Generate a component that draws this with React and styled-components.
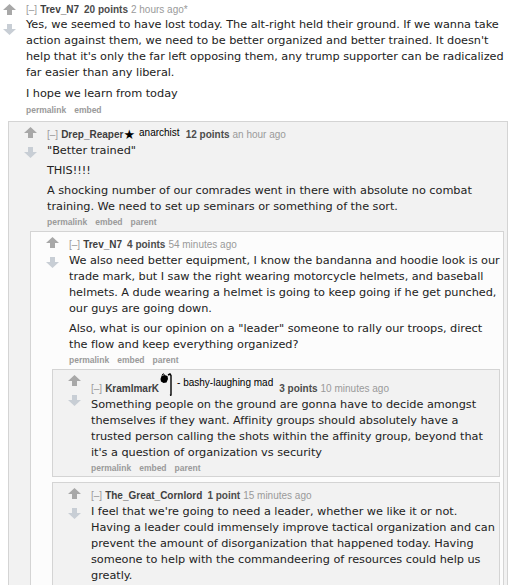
import React from "react";
import styled, { createGlobalStyle } from "styled-components";

const GlobalStyle = createGlobalStyle`
  html, body { margin: 0; padding: 0; background: #ffffff; }
  body { width: 517px; height: 585px; overflow: hidden; }
`;

const Page = styled.div`
  width: 517px;
  overflow: hidden;
  font-family: "Liberation Sans", Arial, sans-serif;
`;

const Box = styled.div`
  background: ${(p) => (p.$depth === 0 ? "#ffffff" : p.$depth % 2 ? "#f2f2f2" : "#fcfcfc")};
  border: ${(p) => (p.$depth === 0 ? "none" : "1px solid #d4d4d4")};
  padding-top: ${(p) => (p.$depth === 0 ? 4 : p.$tall ? 3 : 7)}px;
  padding-bottom: 2px;
  margin-top: ${(p) => (p.$depth === 0 ? 0 : p.$depth > 1 && p.$first ? 3 : 5)}px;
  margin-right: ${(p) => (p.$depth === 0 ? 0 : 3)}px;
`;

const Row = styled.div`
  display: flex;
  padding-left: ${(p) => (p.$depth === 0 ? 3 : 15)}px;
  padding-right: ${(p) => (p.$depth === 0 ? 6 : 0)}px;
`;

const Midcol = styled.div`
  width: 13px;
  flex: none;
  display: flex;
  flex-direction: column;
  gap: 9px;
  margin-right: 10px;
  margin-top: ${(p) => (p.$depth === 0 ? 0 : p.$tall ? 2 : -2)}px;
`;

const Entry = styled.div`
  flex: 1;
  min-width: 0;
`;

const Tagline = styled.div`
  font-size: 10px;
  line-height: 12px;
  color: #888;
  white-space: nowrap;
  display: flex;
  align-items: flex-end;
`;

const Expand = styled.span`
  color: #9a9a9a;
  margin-right: 3px;
`;

const Author = styled.span`
  font-weight: bold;
  color: #3f3f3f;
`;

const Score = styled.span`
  font-weight: bold;
  color: #4c4c4c;
  margin-left: 5px;
  margin-right: 3px;
`;

const Time = styled.span`
  color: #9a9a9a;
`;

const Star = styled.span`
  color: #000;
  font-size: 13px;
  line-height: 12px;
  font-family: "DejaVu Sans", sans-serif;
`;

const Flair = styled.span`
  color: #000;
  font-size: 10px;
  position: relative;
  top: ${(p) => -(p.$raise || 2)}px;
  margin-left: 4px;
  margin-right: 1px;
`;

const FlairIcon = styled.svg`
  display: block;
  margin-left: 1px;
  margin-bottom: -1px;
`;

const Md = styled.div`
  font-family: "DejaVu Sans", Verdana, sans-serif;
  font-size: 11.3px;
  letter-spacing: -0.04px;
  line-height: 16px;
  color: #222;
  margin-top: ${(p) => (p.$depth === 0 ? 1 : 2)}px;
  p { margin: 0 0 ${(p) => (p.$depth === 0 ? 5 : 4)}px 0; }
  p:last-child { margin-bottom: 0; }
`;

const Buttons = styled.div`
  display: flex;
  gap: 8px;
  font-size: 8.5px;
  line-height: 12px;
  margin-top: ${(p) => (p.$depth === 0 ? 2 : 1)}px;
  color: #9a9a9a;
  font-weight: bold;
`;

const Children = styled.div`
  margin-left: ${(p) => (p.$depth === 0 ? 8 : 21)}px;
  margin-right: ${(p) => (p.$depth === 0 ? 6 : 0)}px;
`;

const Arrow = ({ up }) => (
  <svg width="13" height="11" viewBox="0 0 13 11">
    {up ? (
      <polygon points="6.5,0 13,6 9,6 9,11 4,11 4,6 0,6" fill="#a8a8a8" />
    ) : (
      <polygon points="6.5,11 13,5 9,5 9,0 4,0 4,5 0,5" fill="#c8ced5" />
    )}
  </svg>
);

const BashyIcon = () => (
  <FlairIcon width="13" height="23" viewBox="0 0 13 23">
    <path d="M0.5 6 L1.5 3 L4.5 2 L7.5 3 L8 6 L6.5 9.5 L3.5 10 L1 8.5 Z" fill="#000" />
    <path d="M2 2.5 L3 0.8 L4.5 1.5" stroke="#000" strokeWidth="1" fill="none" />
    <path d="M8 2 L10 1 L11 2.5 L11 22 L10 22.5" stroke="#000" strokeWidth="1.4" fill="none" />
  </FlairIcon>
);

const Comment = ({ depth, first, author, flair, score, time, buttons, paras, tall, children }) => (
  <Box $depth={depth} $first={first} $tall={tall}>
    <Row $depth={depth}>
      <Midcol $depth={depth} $tall={tall}>
        <Arrow up />
        <Arrow />
      </Midcol>
      <Entry>
        <Tagline>
          <Expand>[–]</Expand>
          <Author>{author}</Author>
          {flair}
          <Score>{score}</Score>
          <Time>{time}</Time>
        </Tagline>
        <Md $depth={depth}>
          {paras.map((t, i) => (
            <p key={i}>{t}</p>
          ))}
        </Md>
        <Buttons $depth={depth}>
          {buttons.map((b) => (
            <span key={b}>{b}</span>
          ))}
        </Buttons>
      </Entry>
    </Row>
    {children && <Children $depth={depth}>{children}</Children>}
  </Box>
);

export default function App() {
  return (
    <Page>
      <GlobalStyle />
      <Comment
        depth={0}
        first
        author="Trev_N7"
        score="20 points"
        time="2 hours ago*"
        buttons={["permalink", "embed"]}
        paras={[
          "Yes, we seemed to have lost today. The alt-right held their ground. If we wanna take action against them, we need to be better organized and better trained. It doesn't help that it's only the far left opposing them, any trump supporter can be radicalized far easier than any liberal.",
          "I hope we learn from today",
        ]}
      >
        <Comment
          depth={1}
          first
          author="Drep_Reaper"
          flair={
            <>
              <Star>★</Star>
              <Flair>anarchist</Flair>
            </>
          }
          score="12 points"
          time="an hour ago"
          buttons={["permalink", "embed", "parent"]}
          paras={[
            "\"Better trained\"",
            "THIS!!!!",
            "A shocking number of our comrades went in there with absolute no combat training. We need to set up seminars or something of the sort.",
          ]}
        >
          <Comment
            depth={2}
            first
            author="Trev_N7"
            score="4 points"
            time="54 minutes ago"
            buttons={["permalink", "embed", "parent"]}
            paras={[
              "We also need better equipment, I know the bandanna and hoodie look is our trade mark, but I saw the right wearing motorcycle helmets, and baseball helmets. A dude wearing a helmet is going to keep going if he get punched, our guys are going down.",
              "Also, what is our opinion on a \"leader\" someone to rally our troops, direct the flow and keep everything organized?",
            ]}
          >
            <Comment
              depth={3}
              first
              tall
              author="KramlmarK"
              flair={
                <>
                  <BashyIcon />
                  <Flair $raise={6}>- bashy-laughing mad</Flair>
                </>
              }
              score="3 points"
              time="10 minutes ago"
              buttons={["permalink", "embed", "parent"]}
              paras={[
                "Something people on the ground are gonna have to decide amongst themselves if they want. Affinity groups should absolutely have a trusted person calling the shots within the affinity group, beyond that it's a question of organization vs security",
              ]}
            />
            <Comment
              depth={3}
              author="The_Great_Cornlord"
              score="1 point"
              time="15 minutes ago"
              buttons={["permalink", "embed", "parent"]}
              paras={[
                "I feel that we're going to need a leader, whether we like it or not. Having a leader could immensely improve tactical organization and can prevent the amount of disorganization that happened today. Having someone to help with the commandeering of resources could help us greatly.",
              ]}
            />
          </Comment>
        </Comment>
      </Comment>
    </Page>
  );
}
